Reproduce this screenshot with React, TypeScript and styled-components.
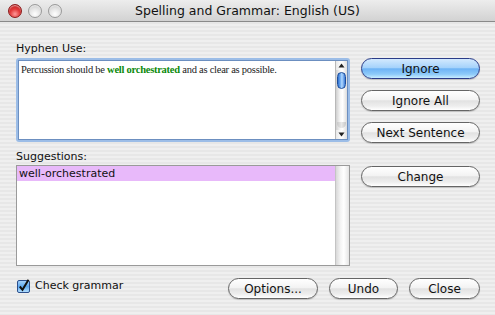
import React from "react";
import styled, { createGlobalStyle } from "styled-components";

const GlobalStyle = createGlobalStyle`
  html, body {
    margin: 0;
    padding: 0;
  }
  body {
    width: 495px;
    height: 315px;
    overflow: hidden;
    font-family: "DejaVu Sans", "Liberation Sans", sans-serif;
    color: #111;
  }
`;

const Window = styled.div`
  width: 495px;
  height: 315px;
  display: flex;
  flex-direction: column;
  background: repeating-linear-gradient(
    to bottom,
    #efefef 0px,
    #efefef 2px,
    #e7e7e7 2px,
    #e7e7e7 4px
  );
`;

const TitleBar = styled.div`
  height: 21px;
  flex: none;
  display: grid;
  grid-template-columns: 1fr auto 1fr;
  align-items: center;
  background: linear-gradient(#ededed, #d2d2d2);
  border-bottom: 1px solid #8a8a8a;
`;

const Lights = styled.div`
  display: flex;
  gap: 6px;
  padding-left: 8px;
`;

const Light = styled.div<{ $red?: boolean }>`
  width: 14px;
  height: 14px;
  border-radius: 50%;
  box-sizing: border-box;
  border: 1px solid ${(p) => (p.$red ? "#8a1a1a" : "#9a9a9a")};
  background: ${(p) =>
    p.$red
      ? "radial-gradient(circle at 50% 75%, #ff9a9a 0%, #e23b3b 45%, #b01515 100%)"
      : "radial-gradient(circle at 50% 75%, #ffffff 0%, #e4e4e4 50%, #bdbdbd 100%)"};
  box-shadow: inset 0 1px 1px rgba(255, 255, 255, 0.6);
`;

const Title = styled.div`
  font-size: 12.5px;
  white-space: nowrap;
  color: #111;
`;

const Body = styled.div`
  display: grid;
  grid-template-columns: 334px 119px;
  column-gap: 11px;
  padding: 20px 15px 0 16px;
`;

const LeftColumn = styled.div`
  display: flex;
  flex-direction: column;
`;

const RightColumn = styled.div`
  display: flex;
  flex-direction: column;
  gap: 11px;
  padding-top: 16px;
`;

const Label = styled.div<{ $gap?: number }>`
  font-size: 11px;
  line-height: 14px;
  height: 14px;
  margin-top: ${(p) => p.$gap ?? 0}px;
`;

const FocusRing = styled.div`
  margin-top: 2px;
  padding: 2px;
  border-radius: 3px;
  background: #9cbde7;
`;

const TextBox = styled.div`
  height: 78px;
  display: flex;
  background: #fff;
  border: 1px solid #6c8fc0;
`;

const Sentence = styled.div`
  flex: 1;
  padding: 2px 2px;
  font-family: "Liberation Serif", "Times New Roman", serif;
  font-size: 10.5px;
  letter-spacing: -0.25px;
  line-height: 13px;
  color: #222;
  white-space: nowrap;
  overflow: hidden;
`;

const Flagged = styled.span`
  color: #0c8a0c;
  font-weight: bold;
`;

const ScrollBar = styled.div`
  width: 11px;
  display: flex;
  flex-direction: column;
  background: linear-gradient(to right, #cfcfcf, #f8f8f8 40%, #ffffff 60%, #dcdcdc);
  border-left: 1px solid #b8b8b8;
`;

const Arrow = styled.div`
  height: 9px;
  display: flex;
  align-items: center;
  justify-content: center;
  background: linear-gradient(to right, #e8e8e8, #ffffff 50%, #e0e0e0);
`;

const Track = styled.div`
  flex: 1;
  padding: 2px 1px;
  display: flex;
  flex-direction: column;
`;

const Thumb = styled.div`
  height: 17px;
  border-radius: 5px;
  border: 1px solid #1d4d9a;
  box-sizing: border-box;
  background: linear-gradient(to right, #2c6fd0, #8cc2fb 45%, #b6dcff 55%, #3a7ad8);
`;

const TrackEnd = styled.div`
  margin-top: auto;
  height: 6px;
  border-radius: 0 0 5px 5px;
  background: linear-gradient(to right, #c8c8c8, #e8e8e8 50%, #c8c8c8);
`;

const ListBox = styled.div`
  margin-top: 1px;
  height: 99px;
  display: flex;
  background: #fff;
  border: 1px solid #9a9a9a;
`;

const Rows = styled.div`
  flex: 1;
`;

const Row = styled.div<{ $selected?: boolean }>`
  height: 15px;
  line-height: 15px;
  font-size: 11px;
  padding-left: 2px;
  background: ${(p) => (p.$selected ? "#e8b9fa" : "transparent")};
`;

const ListTrack = styled.div`
  width: 13px;
  background: linear-gradient(to right, #d8d8d8, #f4f4f4 35%, #ffffff 60%, #e4e4e4);
  border-left: 1px solid #c4c4c4;
`;

const Button = styled.button<{ $default?: boolean; $width?: number; $gap?: number }>`
  width: ${(p) => p.$width ?? 119}px;
  height: 21px;
  margin-top: ${(p) => p.$gap ?? 0}px;
  padding: 0;
  border-radius: 11px;
  font-family: "DejaVu Sans", "Liberation Sans", sans-serif;
  font-size: 12px;
  color: #111;
  border: 1px solid ${(p) => (p.$default ? "#2b3c88" : "#656565")};
  background: ${(p) =>
    p.$default
      ? "linear-gradient(to bottom, #d3e9fe 0%, #a6d3fb 45%, #6eb3f5 52%, #8dcaf9 80%, #c9edff 100%)"
      : "linear-gradient(to bottom, #ffffff 0%, #f3f3f3 45%, #e2e2e2 52%, #eeeeee 80%, #ffffff 100%)"};
  box-shadow: 0 1px 1px rgba(0, 0, 0, 0.18);
  flex: none;
`;

const BottomRow = styled.div`
  grid-column: 1 / 3;
  margin-top: 12px;
  display: flex;
  align-items: flex-start;
  gap: 11px;
`;

const CheckLabel = styled.label`
  display: flex;
  align-items: center;
  gap: 5px;
  font-size: 11px;
  margin-right: auto;
  padding-left: 1px;
  height: 15px;
`;

const CheckBox = () => (
  <svg width="13" height="14" viewBox="0 0 13 14">
    <defs>
      <linearGradient id="cb" x1="0" y1="0" x2="0" y2="1">
        <stop offset="0" stopColor="#a9d4fb" />
        <stop offset="0.5" stopColor="#5ea9f1" />
        <stop offset="1" stopColor="#b8e2ff" />
      </linearGradient>
    </defs>
    <rect x="0.5" y="1.5" width="12" height="12" rx="1.5" fill="url(#cb)" stroke="#2d4f8c" />
    <path d="M2.8 7.5 L5.5 10.8 L11.5 0.8" fill="none" stroke="#111" strokeWidth="2" />
  </svg>
);

const UpArrow = () => (
  <svg width="7" height="5" viewBox="0 0 7 5">
    <path d="M3.5 0.5 L6.5 4.5 L0.5 4.5 Z" fill="#222" />
  </svg>
);

const DownArrow = () => (
  <svg width="7" height="5" viewBox="0 0 7 5">
    <path d="M0.5 0.5 L6.5 0.5 L3.5 4.5 Z" fill="#222" />
  </svg>
);

const App: React.FC = () => {
  return (
    <Window>
      <GlobalStyle />
      <TitleBar>
        <Lights>
          <Light $red />
          <Light />
          <Light />
        </Lights>
        <Title>Spelling and Grammar: English (US)</Title>
        <div />
      </TitleBar>
      <Body>
        <LeftColumn>
          <Label>Hyphen Use:</Label>
          <FocusRing>
            <TextBox>
              <Sentence>
                Percussion should be <Flagged>well orchestrated</Flagged> and as clear as possible.
              </Sentence>
              <ScrollBar>
                <Arrow>
                  <UpArrow />
                </Arrow>
                <Track>
                  <Thumb />
                  <TrackEnd />
                </Track>
                <Arrow>
                  <DownArrow />
                </Arrow>
              </ScrollBar>
            </TextBox>
          </FocusRing>
          <Label $gap={8}>Suggestions:</Label>
          <ListBox>
            <Rows>
              <Row $selected>well-orchestrated</Row>
            </Rows>
            <ListTrack />
          </ListBox>
        </LeftColumn>
        <RightColumn>
          <Button $default>Ignore</Button>
          <Button>Ignore All</Button>
          <Button>Next Sentence</Button>
          <Button $gap={12}>Change</Button>
        </RightColumn>
        <BottomRow>
          <CheckLabel>
            <CheckBox />
            Check grammar
          </CheckLabel>
          <Button $width={90}>Options...</Button>
          <Button $width={69}>Undo</Button>
          <Button $width={71}>Close</Button>
        </BottomRow>
      </Body>
    </Window>
  );
};

export default App;
